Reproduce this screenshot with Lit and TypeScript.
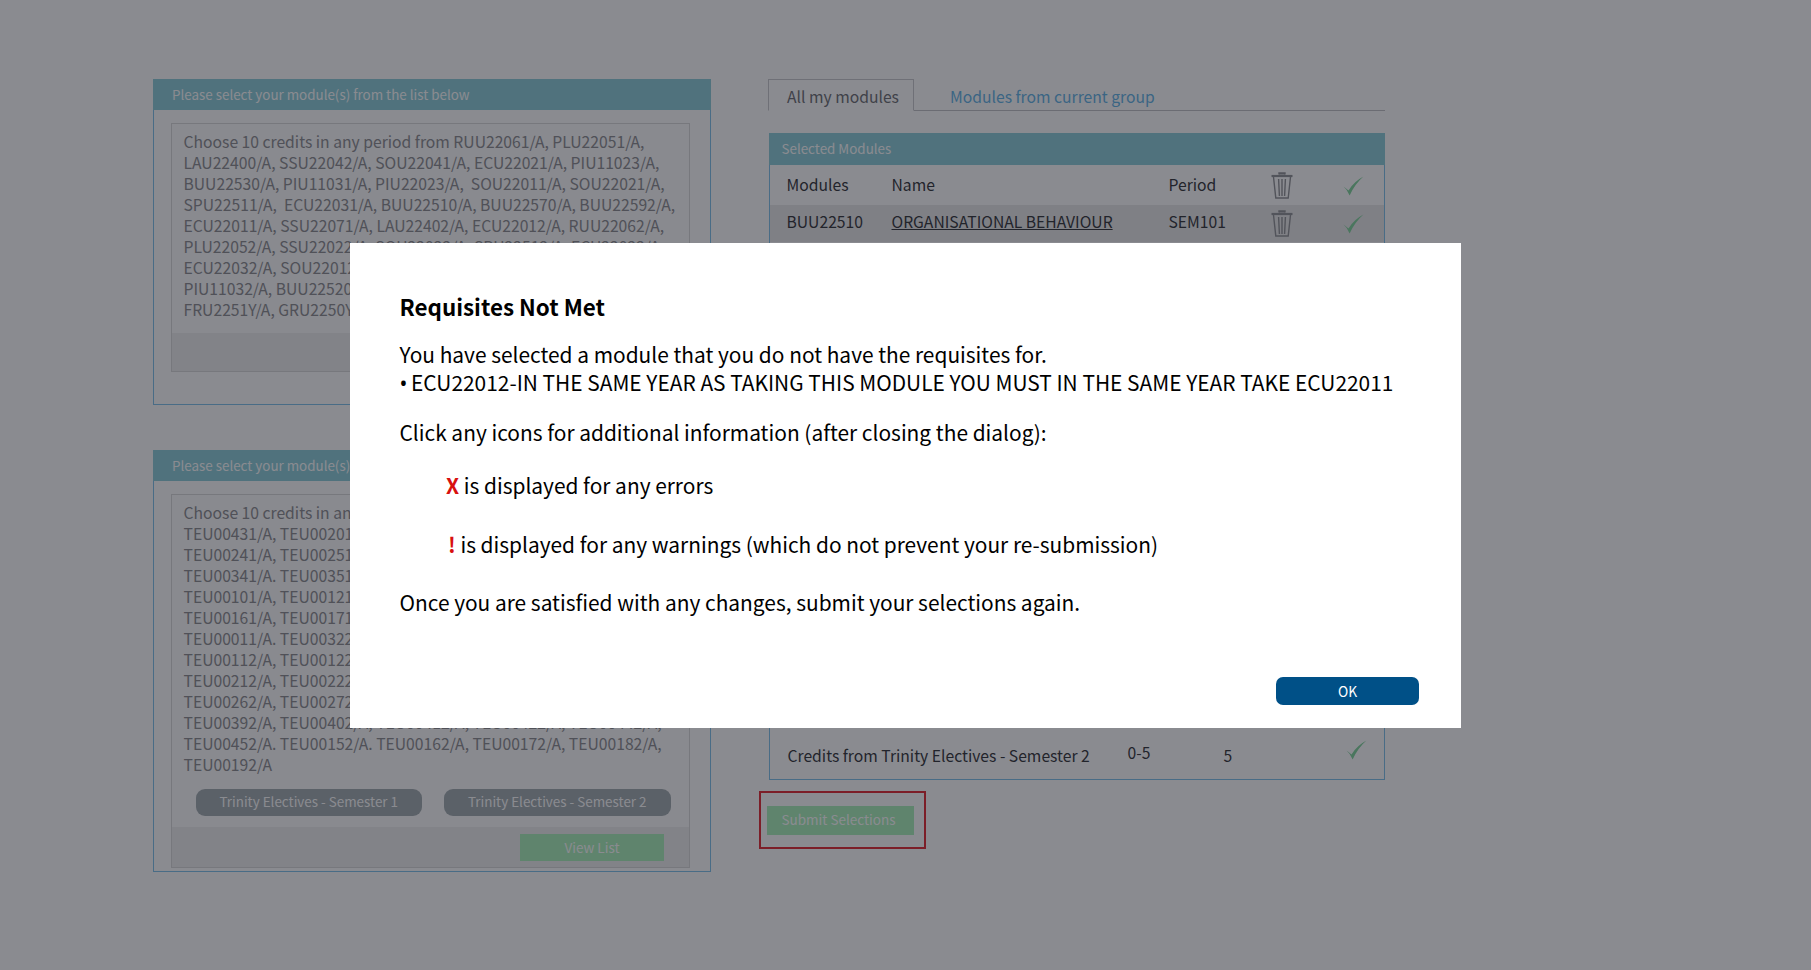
import { LitElement, html, css } from "lit";
import { customElement } from "lit/decorators.js";

const trash = html`<svg class="trash" viewBox="0 0 22 27" width="22" height="27" fill="none" stroke="#8f9094">
  <path d="M8 2.5 V1 H14 V2.5" stroke-width="1.4" fill="#8f9094"/>
  <path d="M0.5 4 H21.5" stroke-width="2.2"/>
  <path d="M2.5 5 L4.8 26 H17.2 L19.5 5" stroke-width="1.4"/>
  <path d="M7.6 7 L8.4 24 M11 7 V24 M14.4 7 L13.6 24" stroke-width="1.4"/>
</svg>`;

const check = html`<svg class="check" viewBox="0 0 19 18" width="21" height="20">
  <path d="M0.5 9.5 L5 13 Q10 5 18.5 0.5 Q11 7 6 17.5 Q4 12.5 0.5 9.5Z" fill="#7fd49a"/>
</svg>`;

const list1 = [
  "Choose 10 credits in any period from RUU22061/A, PLU22051/A,",
  "LAU22400/A, SSU22042/A, SOU22041/A, ECU22021/A, PIU11023/A,",
  "BUU22530/A, PIU11031/A, PIU22023/A,\u00a0 SOU22011/A, SOU22021/A,",
  "SPU22511/A,\u00a0 ECU22031/A, BUU22510/A, BUU22570/A, BUU22592/A,",
  "ECU22011/A, SSU22071/A, LAU22402/A, ECU22012/A, RUU22062/A,",
  "PLU22052/A, SSU22022/A, SOU22022/A, SPU22512/A, ECU22022/A,",
  "ECU22032/A, SOU22012/A",
  "PIU11032/A, BUU22520/A",
  "FRU2251Y/A, GRU2250Y/A",
];

const list2 = [
  "Choose 10 credits in any period from",
  "TEU00431/A, TEU00201/A",
  "TEU00241/A, TEU00251/A",
  "TEU00341/A. TEU00351/A",
  "TEU00101/A, TEU00121/A",
  "TEU00161/A, TEU00171/A",
  "TEU00011/A. TEU00322/A",
  "TEU00112/A, TEU00122/A",
  "TEU00212/A, TEU00222/A",
  "TEU00262/A, TEU00272/A",
  "TEU00392/A, TEU00402/A, TEU00412/A, TEU00422/A, TEU00442/A,",
  "TEU00452/A. TEU00152/A. TEU00162/A, TEU00172/A, TEU00182/A,",
  "TEU00192/A",
];

@customElement("app-root")
export class AppRoot extends LitElement {
  static styles = css`
    :host {
      display: block;
      width: 1811px;
      height: 970px;
      position: relative;
      overflow: hidden;
      background: #fff;
      font-family: "Noto Sans CJK SC", "Noto Sans", sans-serif;
      color: #3c3d42;
    }
    .page {
      display: flex;
      gap: 57px;
      padding: 79px 0 0 153px;
    }
    .left { width: 558px; display: flex; flex-direction: column; gap: 45px; }
    .right { width: 617px; }

    .panel {
      box-sizing: border-box;
      border: 1px solid #7cc0ea;
      display: flex;
      flex-direction: column;
    }
    .head {
      height: 31px;
      margin: -1px -1px 0;
      padding: 0 0 2px 19px;
      box-sizing: border-box;
      background: #8acdd9;
      color: #fff;
      display: flex;
      align-items: center;
      font-size: 13.4px;
      flex: none;
    }
    .p1 { height: 326px; }
    .p2 { height: 422px; }
    .box {
      margin: 13px 20px 0 17px;
      border: 1px solid #d9d9d9;
      background: #fcfcfc;
      display: flex;
      flex-direction: column;
      color: #8a8a8e;
    }
    .p1 .box { height: 249px; box-sizing: border-box; }
    .p2 .box { height: 374px; box-sizing: border-box; margin-top: 13px; }
    .lines {
      padding: 7px 0 0 11.5px;
      font-size: 15.7px;
      line-height: 21px;
      white-space: nowrap;
      flex: 1;
    }
    .foot { background: #efefef; flex: none; }
    .p1 .foot { height: 38px; }
    .p2 .foot {
      height: 40px;
      display: flex;
      justify-content: flex-end;
      align-items: flex-start;
      padding: 7px 25px 0 0;
      box-sizing: border-box;
    }
    .pills { display: flex; gap: 22px; padding: 0 0 11px 23.5px; }
    .pill {
      width: 226.5px;
      height: 27px;
      padding-bottom: 3px;
      box-sizing: border-box;
      border-radius: 9px;
      background: #a0aaae;
      color: #fff;
      font-size: 13.45px;
      display: flex;
      align-items: center;
      justify-content: center;
    }
    .green {
      background: #a8f0b8;
      color: #fff;
      font-size: 13.5px;
      height: 27px;
      padding-bottom: 2px;
      box-sizing: border-box;
      display: flex;
      align-items: center;
    }
    .view { width: 144px; justify-content: center; }

    .tabs {
      display: flex;
      height: 32px;
      box-sizing: border-box;
      border-bottom: 1px solid #c0c0c4;
      font-size: 15.7px;
    }
    .tab {
      width: 146px;
      height: 32px;
      box-sizing: border-box;
      border: 1px solid #c8c8cc;
      border-bottom: 1px solid #fff;
      padding-left: 18px;
      line-height: 33px;
      color: #6a6b70;
    }
    .tab.link {
      border: none;
      width: auto;
      padding-left: 36px;
      color: #5fb2e6;
      line-height: 35px;
    }
    .sel {
      margin-top: 22px;
      margin-left: 0.5px;
      height: 647px;
      font-size: 15.7px;
    }
    .sel .head { padding-left: 13px; padding-bottom: 3px; height: 32px; font-size: 13.4px; }
    .row {
      display: grid;
      grid-template-columns: 105px 277px 102px 75px auto;
      align-items: center;
      padding-left: 17px;
      height: 40px;
      box-sizing: border-box;
      flex: none;
      color: #2f3035;
    }
    .row > span { padding-bottom: 2px; }
    .row.alt { background: #e8e8e8; height: 37px; }
    .row.alt > span { padding-bottom: 5px; }
    .row.alt .name { text-decoration: underline; }
    .row svg { display: block; }
    .row .check { margin-left: -3px; margin-top: 1px; }
    .row.alt .check { margin-top: 0; }
    .spacer { flex: 1; }
    .credits {
      display: grid;
      grid-template-columns: 340px 96px 122px auto;
      padding: 4px 0 0 18px;
      height: 52px;
      box-sizing: border-box;
      align-items: center;
      flex: none;
      color: #2f3035;
    }
    .credits .range { margin-top: -5px; }
    .credits svg { margin-top: -10px; display: block; }
    .red {
      margin: 11px 0 0 -9.5px;
      width: 167px;
      height: 58px;
      box-sizing: border-box;
      border: 2px solid #e2242e;
      padding: 13px 0 0 6px;
    }
    .submit { width: 147px; height: 29px; padding-left: 15px; padding-bottom: 3px; }

    .overlay {
      position: absolute;
      inset: 0;
      background: rgba(21, 23, 33, 0.5);
    }
    .modal {
      position: absolute;
      left: 350px;
      top: 243px;
      width: 1111px;
      height: 485px;
      box-sizing: border-box;
      background: #fff;
      padding: 45px 36px 0 49.5px;
      color: #000;
      font-size: 20.9px;
      line-height: 28px;
      display: flex;
      flex-direction: column;
    }
    h2 { margin: 0 0 16px; font-size: 22.4px; line-height: 36px; font-weight: 700; }
    p { margin: 0; white-space: nowrap; }
    .bullet { font-family: "Noto Sans", sans-serif; margin-right: -1px; }
    .gap { margin-top: 21px; }
    .legend { margin-top: 25px; padding-left: 46.5px; }
    .legend + .legend { margin-top: 31px; }
    .legend b { color: #d8100f; font-weight: 700; }
    .legend.warn { padding-left: 48.5px; }
    .after { margin-top: 30px; }
    .ok {
      position: absolute;
      right: 42px;
      bottom: 23px;
      width: 143px;
      height: 28px;
      border-radius: 7px;
      background: #005087;
      color: #fff;
      font-size: 13.8px;
      display: flex;
      align-items: center;
      justify-content: center;
    }
  `;

  render() {
    return html`
      <div class="page">
        <div class="left">
          <section class="panel p1">
            <div class="head">Please select your module(s) from the list below</div>
            <div class="box">
              <div class="lines">${list1.map((l) => html`${l}<br />`)}</div>
              <div class="foot"></div>
            </div>
          </section>
          <section class="panel p2">
            <div class="head">Please select your module(s) from the list below</div>
            <div class="box">
              <div class="lines">${list2.map((l) => html`${l}<br />`)}</div>
              <div class="pills">
                <div class="pill">Trinity Electives - Semester 1</div>
                <div class="pill">Trinity Electives - Semester 2</div>
              </div>
              <div class="foot"><div class="green view">View List</div></div>
            </div>
          </section>
        </div>
        <div class="right">
          <div class="tabs">
            <div class="tab">All my modules</div>
            <div class="tab link">Modules from current group</div>
          </div>
          <section class="panel sel">
            <div class="head">Selected Modules</div>
            <div class="row">
              <span>Modules</span><span>Name</span><span>Period</span>${trash}${check}
            </div>
            <div class="row alt">
              <span>BUU22510</span><span class="name">ORGANISATIONAL BEHAVIOUR</span><span>SEM101</span>${trash}${check}
            </div>
            <div class="spacer"></div>
            <div class="credits">
              <span>Credits from Trinity Electives - Semester 2</span>
              <span class="range">0-5</span><span>5</span>${check}
            </div>
          </section>
          <div class="red"><div class="green submit">Submit Selections</div></div>
        </div>
      </div>
      <div class="overlay"></div>
      <div class="modal" role="dialog">
        <h2>Requisites Not Met</h2>
        <p>You have selected a module that you do not have the requisites for.</p>
        <p><span class="bullet">•</span> ECU22012-IN THE SAME YEAR AS TAKING THIS MODULE YOU MUST IN THE SAME YEAR TAKE ECU22011</p>
        <p class="gap">Click any icons for additional information (after closing the dialog):</p>
        <p class="legend"><b>X</b> is displayed for any errors</p>
        <p class="legend warn"><b>!</b> is displayed for any warnings (which do not prevent your re-submission)</p>
        <p class="after">Once you are satisfied with any changes, submit your selections again.</p>
        <div class="ok">OK</div>
      </div>
    `;
  }
}
